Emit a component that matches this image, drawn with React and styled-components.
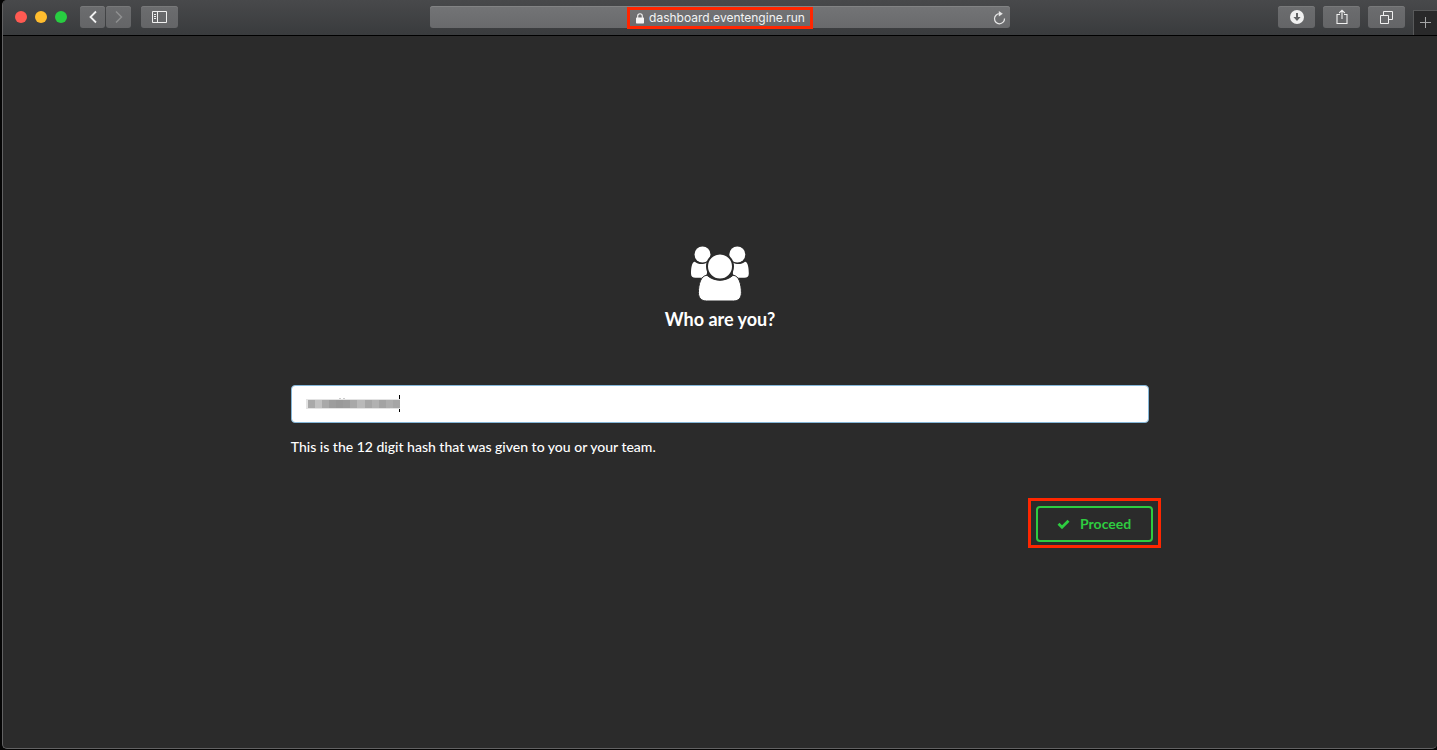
import React from "react";
import styled, { createGlobalStyle } from "styled-components";

const GlobalStyle = createGlobalStyle`
  *, *::before, *::after { box-sizing: border-box; }
  body { margin: 0; background: #050505; }
`;

const Window = styled.div`
  min-height: 100vh;
  display: flex;
  flex-direction: column;
  border: 0 solid #050505;
  border-left-width: 2px;
  border-bottom-width: 1px;
  font-family: Lato, "Liberation Sans", sans-serif;
`;

const Frame = styled.div`
  flex: 1;
  display: flex;
  flex-direction: column;
  border: 0 solid #626263;
  border-left-width: 1px;
  border-bottom-width: 1px;
  border-radius: 5px 0 5px 5px;
  background: #2b2b2b;
  overflow: hidden;
`;

const Toolbar = styled.header`
  display: grid;
  grid-template-columns: minmax(0, 1fr) 40.5% minmax(0, 1fr);
  height: 36px;
  padding-top: 6px;
  border-bottom: 1px solid #000;
  background: linear-gradient(#48494b, #393b3d);
`;

const ToolGroup = styled.div`
  display: flex;
  align-items: flex-start;
  justify-content: ${(p) => (p.$end ? "flex-end" : "flex-start")};
  gap: ${(p) => p.$gap}px;
`;

const Lights = styled.div`
  display: flex;
  gap: 8px;
  padding: 5px 12px 0 12px;
`;

const Light = styled.button`
  width: 12px;
  height: 12px;
  padding: 0;
  border: 0;
  border-radius: 50%;
  background: ${(p) => p.$color};
`;

const ToolButton = styled.button`
  display: flex;
  align-items: center;
  justify-content: center;
  width: ${(p) => (p.$narrow ? 25 : 37)}px;
  height: 22px;
  padding: 0;
  border: 0;
  border-radius: 3px;
  background: linear-gradient(#6c6d6f, #646567);
  box-shadow: inset 0 1px #78797a;
  color: ${(p) => (p.disabled ? "#8f9091" : "#f0f0f0")};
`;

const NewTab = styled.button`
  display: flex;
  align-items: center;
  justify-content: center;
  align-self: flex-end;
  width: 24px;
  height: 25px;
  padding: 0;
  border: 1px solid #58595a;
  border-width: 1px 0 0 1px;
  background: #29292a;
  color: #a5a6a7;
`;

const AddressBar = styled.div`
  display: grid;
  grid-template-columns: 22px 1fr 22px;
  align-items: center;
  height: 22px;
  border-radius: 3px;
  background: linear-gradient(#737476, #696a6c);
  box-shadow: inset 0 1px #828384;
`;

const Highlight = styled.div`
  border: 3px solid #ff2600;
  padding: ${(p) => p.$pad};
`;

const AddressHighlight = styled(Highlight)`
  grid-column: 2;
  justify-self: center;
  align-self: start;
  display: flex;
  align-items: center;
  gap: 4px;
  height: 22px;
  margin-top: 1px;
  color: #f4f4f4;
  font: 400 12px/16px Inter, "Liberation Sans", sans-serif;
`;

const Reload = styled.button`
  display: flex;
  padding: 0;
  border: 0;
  background: none;
  color: #e6e6e6;
  justify-self: center;
`;

const Page = styled.main`
  flex: 1;
  display: flex;
  flex-direction: column;
  align-items: center;
  justify-content: center;
  padding-top: 9px;
  color: #fff;
`;

const Title = styled.h1`
  margin: 3px 0 52px;
  font-size: 18px;
  line-height: 28px;
  font-weight: 700;
`;

const Form = styled.form`
  width: calc(60% - 2px);
  display: flex;
  flex-direction: column;
`;

const Field = styled.div`
  position: relative;
`;

const HashInput = styled.input`
  display: block;
  width: 100%;
  height: 38px;
  padding: 0 14px;
  border: 1px solid #85b7d9;
  border-radius: 4px;
  background: #fff;
  color: #222;
  font: 14px/17px Lato, sans-serif;
  outline: 0;
`;

const MaskedValue = styled.svg`
  position: absolute;
  left: 15px;
  top: 10px;
  pointer-events: none;
`;

const Hint = styled.label`
  margin-top: 14px;
  font-size: 14px;
  line-height: 20px;
  font-weight: 500;
`;

const Actions = styled.div`
  display: flex;
  justify-content: flex-end;
  margin: 41px -12px 0 0;
`;

const Proceed = styled.button`
  display: flex;
  align-items: center;
  gap: 10px;
  height: 36px;
  padding: 0 20px 0 19px;
  border: 2px solid #2ecc40;
  border-radius: 4px;
  background: transparent;
  color: #2ecc40;
  font: 700 14px/20px Lato, sans-serif;
`;

const Stroke = ({ width, height, children }) => (
  <svg width={width} height={height} viewBox={`0 0 ${width} ${height}`} fill="none" stroke="currentColor" aria-hidden="true">
    {children}
  </svg>
);

const mosaic = [
  [2, 7, "#a9a9a9"], [9, 7, "#c1c1c1"], [16, 7, "#a9a9a9"], [23, 7, "#9d9d9d"],
  [30, 7, "#999"], [37, 7, "#9c9c9c"], [44, 7, "#a8a8a8"], [51, 8, "#b9b9b9"],
  [59, 7, "#a6a6a6"], [66, 7, "#b1b1b1"], [73, 7, "#a3a3a3"], [80, 7, "#adadad"], [87, 7, "#a6a6a6"],
];

export default function App() {
  return (
    <Window>
      <GlobalStyle />
      <Frame>
        <Toolbar>
          <ToolGroup $gap={10}>
            <ToolGroup $gap={1}>
              <Lights>
                <Light $color="#ff5a52" aria-label="Close" />
                <Light $color="#ffbd2e" aria-label="Minimise" />
                <Light $color="#28cd41" aria-label="Zoom" />
              </Lights>
              <ToolButton $narrow aria-label="Back">
                <Stroke width={10} height={14}>
                  <path d="M8 1.5 2.5 7 8 12.5" strokeWidth="1.8" />
                </Stroke>
              </ToolButton>
              <ToolButton $narrow disabled aria-label="Forward">
                <Stroke width={10} height={14}>
                  <path d="M2 1.5 7.5 7 2 12.5" strokeWidth="1.5" />
                </Stroke>
              </ToolButton>
            </ToolGroup>
            <ToolButton aria-label="Sidebar">
              <Stroke width={15} height={12}>
                <path d="M.5 .5h14v11H.5zM5.5 .5v11M2 3.5h2M2 5.5h2M2 7.5h2" />
              </Stroke>
            </ToolButton>
          </ToolGroup>

          <AddressBar>
            <AddressHighlight $pad="0 5px">
              <svg width="10" height="11" viewBox="0 0 10 11" aria-hidden="true">
                <rect x="1" y="4.5" width="8" height="6" rx=".7" fill="currentColor" />
                <path d="M2.7 5V3a2.3 2.3 0 0 1 4.6 0v2" fill="none" stroke="currentColor" strokeWidth="1.1" />
              </svg>
              <span>dashboard.eventengine.run</span>
            </AddressHighlight>
            <Reload aria-label="Reload">
              <Stroke width={13} height={14}>
                <path d="M7 2.8A5 5 0 1 0 11.5 7.5" strokeWidth="1.2" />
                <path d="M5.8 0 9.8 2.8 5.8 5.4z" fill="currentColor" stroke="none" />
              </Stroke>
            </Reload>
          </AddressBar>

          <ToolGroup $end $gap={8}>
            <ToolButton aria-label="Downloads">
              <svg width="14" height="14" viewBox="0 0 14 14" aria-hidden="true">
                <circle cx="7" cy="7" r="7" fill="currentColor" />
                <path d="M6 3h2v4h2.6L7 11 3.4 7H6z" fill="#626365" />
              </svg>
            </ToolButton>
            <ToolButton aria-label="Share">
              <Stroke width={12} height={16}>
                <path d="M4 5.5H1v9h10v-9H8M6 10V1.5M3.2 4 6 1.2 8.8 4" strokeWidth="1.1" />
              </Stroke>
            </ToolButton>
            <ToolButton aria-label="Tabs">
              <Stroke width={13} height={13}>
                <path d="M.5 4.5h8v8h-8zM3.5 4.5v-4h9v8h-4" />
              </Stroke>
            </ToolButton>
            <NewTab aria-label="New tab">
              <Stroke width={12} height={12}>
                <path d="M5.5 0v11M0 5.5h11" />
              </Stroke>
            </NewTab>
          </ToolGroup>
        </Toolbar>

        <Page>
          <svg width="60" height="56" viewBox="0 0 60 56" fill="#fff" aria-hidden="true">
            <circle cx="12.5" cy="8.5" r="8" />
            <circle cx="47.3" cy="8.5" r="8" />
            <path d="M4.8 15.7C8 18.5 13 19 17 16.5V26.5C17 29 15 31.5 12 31.8H5.5C2.5 31.8 1 30.5 1 27.5C1 23 1.7 15.8 4.8 15.7z" />
            <path d="M55 15.7C51.8 18.5 46.8 19 42.8 16.5V26.5C42.8 29 44.8 31.5 47.8 31.8H54.3C57.3 31.8 58.8 30.5 58.8 27.5C58.8 23 58.1 15.8 55 15.7z" />
            <path d="M17 29.3C24 35.8 36 35.8 43 29.3C49 29.3 51.4 38.5 51.4 46.5C51.4 52 48.5 55 43.5 55H16.5C11.5 55 8.4 52 8.4 46.5C8.4 38.5 11 29.3 17 29.3z" stroke="#2b2b2b" strokeWidth="1" />
            <circle cx="30" cy="20.5" r="13" stroke="#2b2b2b" strokeWidth="2" />
          </svg>
          <Title>Who are you?</Title>
          <Form onSubmit={(e) => e.preventDefault()}>
            <Field>
              <HashInput id="team-hash" type="text" />
              <MaskedValue width="95" height="18" viewBox="0 0 95 18" shapeRendering="crispEdges" aria-hidden="true">
                <path d="M0 4h94v10H0z" fill="#e3e3e3" />
                {mosaic.map(([x, w, fill]) => (
                  <rect key={x} x={x} y="5" width={w} height="8" fill={fill} />
                ))}
                <path d="M33 3h2v1h-2zM37 3h2v1h-2z" fill="#ccc" />
                <path d="M93 0h1v4h-1zM93 14h1v3h-1z" fill="#000" />
              </MaskedValue>
            </Field>
            <Hint htmlFor="team-hash">This is the 12 digit hash that was given to you or your team.</Hint>
            <Actions>
              <Highlight $pad="5px 5px 3px">
                <Proceed type="submit">
                  <svg width="13" height="10" viewBox="0 0 13 10" aria-hidden="true">
                    <path d="M1.5 4.8 5 8.2 11.5 1.7" fill="none" stroke="currentColor" strokeWidth="2.8" />
                  </svg>
                  Proceed
                </Proceed>
              </Highlight>
            </Actions>
          </Form>
        </Page>
      </Frame>
    </Window>
  );
}
